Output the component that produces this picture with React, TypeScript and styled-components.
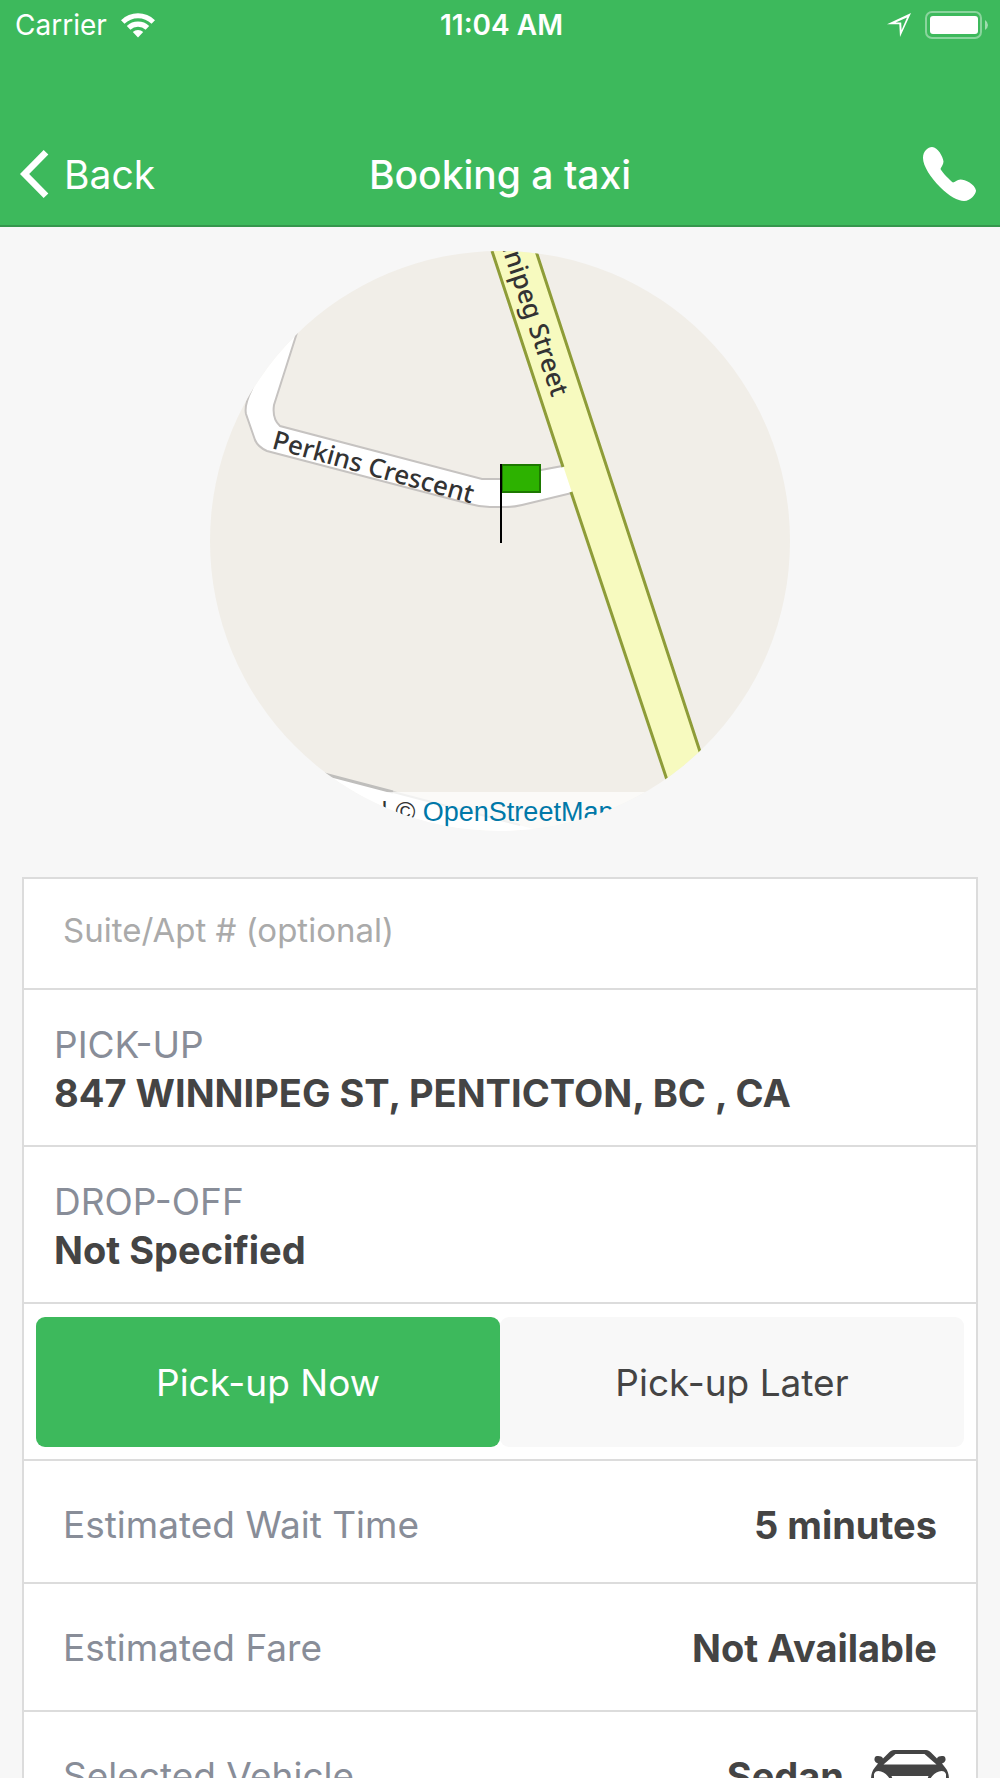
import React, { useState } from "react";
import styled, { createGlobalStyle } from "styled-components";

const green = "#3db95c";
const line = "#dcdcdc";
const ink = "#444444";
const muted = "#888d98";

const GlobalStyle = createGlobalStyle`
  * { box-sizing: border-box; }
  body {
    margin: 0;
    background: #f7f7f7;
    color: ${ink};
    font-family: Inter, "Liberation Sans", sans-serif;
  }
`;

const Screen = styled.div`
  display: flex;
  flex-direction: column;
  height: 100vh;
  overflow: hidden;
`;

const Header = styled.header`
  flex: none;
  background: ${green};
  border-bottom: 2px solid #35964d;
  color: #fff;
`;

const StatusBar = styled.div`
  display: grid;
  grid-template-columns: 1fr auto 1fr;
  align-items: center;
  height: 50px;
  padding: 0 12px 0 15px;
  font-size: 28px;
`;

const StatusGroup = styled.div<{ $end?: boolean }>`
  display: flex;
  align-items: center;
  gap: 14px;
  justify-content: ${(p) => (p.$end ? "flex-end" : "flex-start")};
`;

const Clock = styled.time`
  font-weight: 600;
`;

const NavBar = styled.nav`
  display: grid;
  grid-template-columns: 1fr auto 1fr;
  align-items: center;
  margin-top: 73px;
  height: 102px;
  padding: 0 20px;
`;

const BackButton = styled.button`
  display: flex;
  align-items: center;
  gap: 15px;
  justify-self: start;
  padding: 0;
  border: 0;
  background: none;
  color: inherit;
  font: inherit;
  font-size: 39px;
`;

const Title = styled.h1`
  margin: 0;
  font-size: 39px;
  font-weight: 500;
`;

const CallLink = styled.a`
  display: flex;
  justify-self: end;
  padding: 0 4px;
  color: inherit;
`;

const Content = styled.main`
  flex: 1;
  min-height: 0;
  overflow-y: auto;
  scrollbar-width: none;
  padding: 24px 22px;
`;

const MapCircle = styled.div`
  position: relative;
  width: 580px;
  height: 580px;
  margin: 0 auto 46px;
  border-radius: 50%;
  overflow: hidden;
  background: #f1eee8;

  svg {
    display: block;
  }
`;

const Attribution = styled.div`
  position: absolute;
  right: 0;
  bottom: 0;
  padding: 2px 28px 0 12px;
  background: rgba(255, 255, 255, 0.7);
  color: #333;
  font: 27px/37px "Liberation Sans", sans-serif;
  white-space: nowrap;

  a {
    color: #0078a8;
    text-decoration: none;
  }
`;

const Card = styled.section`
  display: flex;
  flex-direction: column;
  border: 2px solid ${line};
  background: #fff;
`;

const SuiteInput = styled.input`
  width: 100%;
  height: 111px;
  padding: 0 39px 8px;
  border: 0;
  border-bottom: 2px solid ${line};
  background: transparent;
  color: ${ink};
  font: inherit;
  font-size: 33px;
  outline: 0;

  &::placeholder {
    color: #aaaaaa;
    opacity: 1;
  }
`;

const Place = styled.div`
  padding: 31px 30px 28px;
  border-bottom: 2px solid ${line};
  font-size: 37px;
  line-height: 48px;
`;

const PlaceLabel = styled.div`
  color: ${muted};
`;

const PlaceValue = styled.div`
  font-size: 38px;
  font-weight: 700;
`;

const Segments = styled.div`
  display: flex;
  padding: 13px 12px 12px;
  border-bottom: 2px solid ${line};
`;

const Segment = styled.button<{ $active: boolean }>`
  flex: 1;
  height: 130px;
  padding: 0;
  border: 0;
  border-radius: 9px;
  background: ${(p) => (p.$active ? green : "#f8f8f8")};
  color: ${(p) => (p.$active ? "#fff" : ink)};
  font: inherit;
  font-size: 37px;
`;

const Details = styled.dl`
  margin: 0;
`;

const Detail = styled.div<{ $bottom: number; $icon?: boolean }>`
  display: flex;
  justify-content: space-between;
  padding: 40px ${(p) => (p.$icon ? 27 : 39)}px ${(p) => p.$bottom}px 39px;
  border-bottom: 2px solid ${line};
  font-size: 37px;
  line-height: 48px;

  &:last-child {
    border-bottom: 0;
  }
`;

const DetailLabel = styled.dt`
  color: ${muted};
`;

const DetailValue = styled.dd`
  display: flex;
  gap: 27px;
  margin: 0;
  font-size: 38px;
  font-weight: 700;

  svg {
    margin: -2px 0;
  }
`;

const WifiIcon = () => (
  <svg width="34" height="25" viewBox="0 0 34 25" fill="#fff" aria-hidden="true">
    <path d="M0 7.2a24.5 24.5 0 0 1 34 0l-3.5 3.6a19.4 19.4 0 0 0-27 0z" />
    <path d="M5.8 13.1a16.2 16.2 0 0 1 22.4 0l-3.6 3.6a11 11 0 0 0-15.2 0z" />
    <path d="M11.8 19.1a7.6 7.6 0 0 1 10.4 0L17 24.6z" />
  </svg>
);

const LocationIcon = () => (
  <svg width="24" height="24" viewBox="0 0 24 24" fill="#fff" fillRule="evenodd" aria-hidden="true">
    <path d="M24 0 0 11.300H12.300L13 24zM20 4.500 14.600 17 14.200 9.600 8.600 9.500z" />
  </svg>
);

const BatteryIcon = () => (
  <svg width="63" height="28" viewBox="0 0 63 28" aria-hidden="true">
    <rect x="1" y="1" width="55" height="26" rx="6" fill="none" stroke="#fff" strokeOpacity="0.4" strokeWidth="2" />
    <rect x="5" y="5" width="48" height="18" rx="3" fill="#fff" />
    <path d="M60 9q3 2 3 5t-3 5z" fill="#fff" fillOpacity="0.5" />
  </svg>
);

const ChevronIcon = () => (
  <svg width="29" height="48" viewBox="0 0 29 48" fill="none" stroke="#fff" strokeWidth="6.6" aria-hidden="true">
    <path d="M26 2.3 4.6 24 26 45.7" />
  </svg>
);

const PhoneIcon = () => (
  <svg width="54" height="54" viewBox="0 0 54 54" fill="#fff" aria-hidden="true">
    <path d="M10 0C6 0 1 4 1 11C1 19 9 31 18 40C27 49 36 54 42 54C49 54 54 47 54 43.500C53 37 43 32.500 38.500 32.500C35 32.500 33 35.500 31 35.500C29 34.500 19 24 18.500 22C19 20 21.500 18 21.500 14.500C21 10 16 0 10 0Z" />
  </svg>
);

const CarIcon = () => (
  <svg width="78" height="52" viewBox="0 0 78 52" aria-hidden="true">
    <path
      d="M23 0H55C57 0 58.500 1 60 2.500L66 8.500C67 6 71 5.500 73.500 6.500C75 8 75 11 73 12.500L71 13.500L74.500 18C77 21 78 25 78 30V52H66V46H12V52H0V30C0 25 1 21 3.500 18L7 13.500L5 12.500C3 11 3 8 4.500 6.500C7 5.500 11 6 12 8.500L18 2.500C19.500 1 21 0 23 0Z"
      fill={ink}
    />
    <path d="M24.500 4H53.500L65.500 14.500H12.500Z" fill="#fff" />
    <path d="M3 24C5 20 8 21 10 21.500C14 23 18 26 19 30L16 34H3ZM75 24C73 20 70 21 68 21.500C64 23 60 26 59 30L62 34H75ZM20.500 26H57.500L54 36H24Z" fill="#fff" />
  </svg>
);

const MapDrawing = () => (
  <svg width="580" height="580" viewBox="0 0 580 580" role="img" aria-label="Map of the pick-up point">
    <path
      d="M60 70 42 138Q34 154 36 163L45 189Q48 196 57 200L260 253Q270 256 280 256H296Q304 256 312 254L366 241 358 214 331 219Q300 227 290 228H272L70 175Q62 168 64 154L92 66z"
      fill="#fff"
      stroke="#c6c3c1"
      strokeWidth="2"
    />
    <path d="M60 508 118 524 183 541 335 581H0z" fill="#fff" />
    <path d="M60 508 118 524 183 541" fill="none" stroke="#bfbebc" strokeWidth="3" />
    <path d="M183 541 310 574" fill="none" stroke="#d0cfcd" strokeWidth="2" />
    <path d="M282 0 474 580H516L326 0z" fill="#f7fabf" />
    <path d="M282 0 353 216M361 241 474 580M326 0 516 580" fill="none" stroke="#8e9c38" strokeWidth="3" />
    <g fontFamily='"Noto Sans", sans-serif' fontSize="26" fontWeight="500" fill="#333">
      <text x="61" y="197" transform="rotate(15.500 61 197)">
        Perkins Crescent
      </text>
      <text x="342" y="147" textAnchor="end" transform="rotate(71.500 342 147)">
        Winnipeg Street
      </text>
    </g>
    <rect x="292" y="214" width="38" height="27" fill="#2db200" stroke="#1d7800" strokeWidth="2" />
    <path d="M291 213V292" stroke="#000" strokeWidth="2" />
  </svg>
);

const App = () => {
  const [pickup, setPickup] = useState<"now" | "later">("now");

  return (
    <Screen>
      <GlobalStyle />
      <Header>
        <StatusBar>
          <StatusGroup>
            <span>Carrier</span>
            <WifiIcon />
          </StatusGroup>
          <Clock>11:04 AM</Clock>
          <StatusGroup $end>
            <LocationIcon />
            <BatteryIcon />
          </StatusGroup>
        </StatusBar>
        <NavBar>
          <BackButton type="button">
            <ChevronIcon />
            Back
          </BackButton>
          <Title>Booking a taxi</Title>
          <CallLink href="tel:" aria-label="Call">
            <PhoneIcon />
          </CallLink>
        </NavBar>
      </Header>
      <Content>
        <MapCircle>
          <MapDrawing />
          <Attribution>
            <a href="#leaflet">Leaflet</a> | © <a href="#osm">OpenStreetMap</a> contributors
          </Attribution>
        </MapCircle>
        <Card>
          <SuiteInput type="text" aria-label="Suite/Apt # (optional)" placeholder="Suite/Apt # (optional)" />
          <Place>
            <PlaceLabel>PICK-UP</PlaceLabel>
            <PlaceValue>847 WINNIPEG ST, PENTICTON, BC , CA</PlaceValue>
          </Place>
          <Place>
            <PlaceLabel>DROP-OFF</PlaceLabel>
            <PlaceValue>Not Specified</PlaceValue>
          </Place>
          <Segments>
            <Segment type="button" $active={pickup === "now"} onClick={() => setPickup("now")}>
              Pick-up Now
            </Segment>
            <Segment type="button" $active={pickup === "later"} onClick={() => setPickup("later")}>
              Pick-up Later
            </Segment>
          </Segments>
          <Details>
            <Detail $bottom={33}>
              <DetailLabel>Estimated Wait Time</DetailLabel>
              <DetailValue>5 minutes</DetailValue>
            </Detail>
            <Detail $bottom={38}>
              <DetailLabel>Estimated Fare</DetailLabel>
              <DetailValue>Not Available</DetailValue>
            </Detail>
            <Detail $bottom={38} $icon>
              <DetailLabel>Selected Vehicle</DetailLabel>
              <DetailValue>
                Sedan
                <CarIcon />
              </DetailValue>
            </Detail>
          </Details>
        </Card>
      </Content>
    </Screen>
  );
};

export default App;
